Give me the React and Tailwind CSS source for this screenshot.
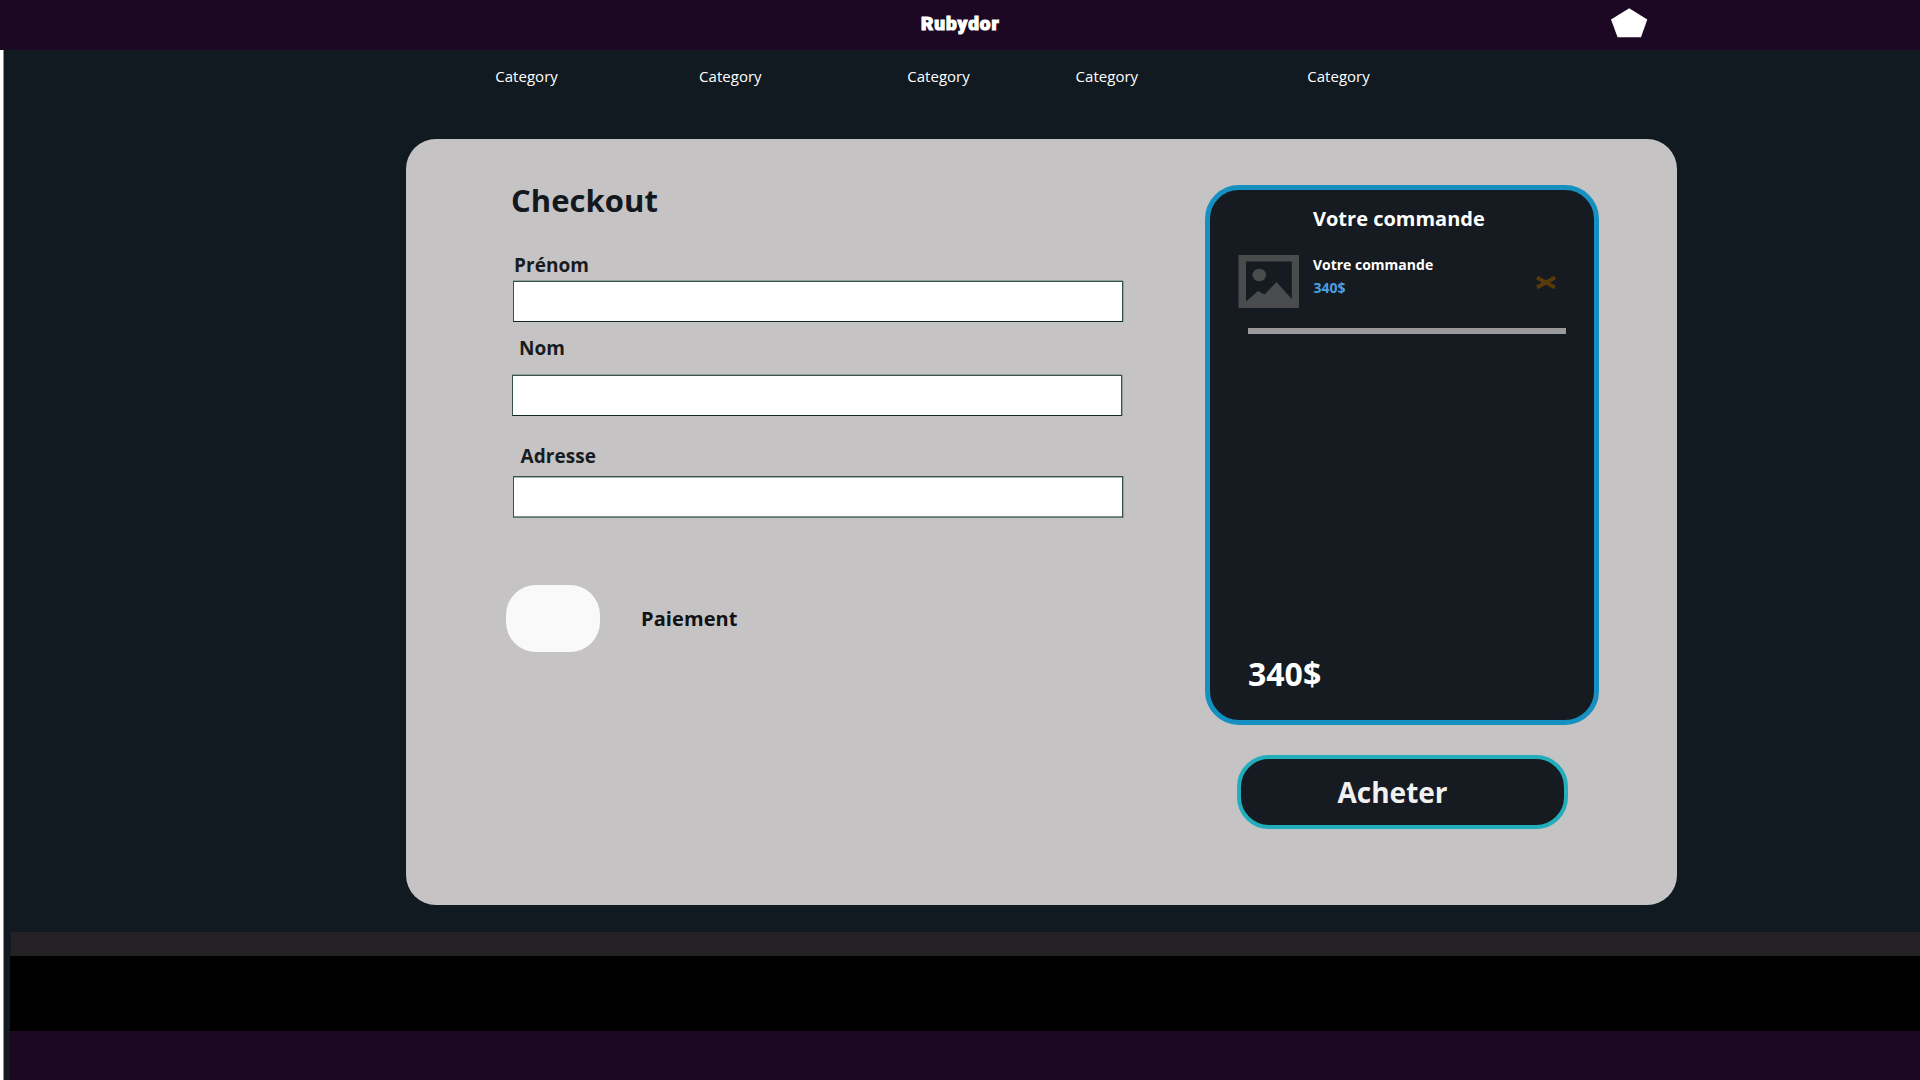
import React from "react";

const categories = [
  "w-[203.8px]",
  "w-[208.2px]",
  "w-[168.3px]",
  "w-[231.7px]",
  "w-[80px]",
];

function Header() {
  return (
    <header className="flex h-[50px] bg-[#1c0822]">
      <div
        className="ml-[921px] mt-[12px] h-6 w-[690px] whitespace-nowrap text-[19px] leading-6 font-black tracking-[0.95px] text-white [-webkit-text-stroke:1.1px_white]"
        style={{ fontFamily: "Roboto, sans-serif" }}
      >
        Rubydor
      </div>
      <svg className="mt-2 h-[30px] w-[37px]" viewBox="0 0 37 30">
        <path d="M18.2 0.2 L36.3 11.6 L30 29.3 H6.6 L0 11.6 Z" fill="#fff" />
      </svg>
    </header>
  );
}

function Nav() {
  return (
    <nav className="flex pt-[14px] pb-px pl-[495.3px] text-[15px] leading-6 font-[480] tracking-[0.02px] text-white">
      {categories.map((w, i) => (
        <a key={i} className={w}>
          Category
        </a>
      ))}
    </nav>
  );
}

function Field({ label, labelClass, inputClass }) {
  return (
    <>
      <label className={`block text-[19px] leading-6 font-[670] tracking-[0.05px] text-[#181c21] ${labelClass}`}>
        {label}
      </label>
      <input
        className={`block w-[610px] rounded-none border border-[#36524e] bg-white outline-none ${inputClass}`}
      />
    </>
  );
}

function Form() {
  return (
    <section className="w-[799.4px] pt-[41.5px] pl-[100px]">
      <h1 className="ml-[5px] text-[31px] leading-10 font-[670] tracking-[0.05px] text-[#12181d]">
        Checkout
      </h1>
      <Field
        label="Prénom"
        labelClass="mt-[33px] ml-[8px]"
        inputClass="mt-1 ml-[7px] h-[41px] border-b-[#102a27] shadow-[0_-1px_0_#91a19d,1px_0_0_#91a19d]"
      />
      <Field
        label="Nom"
        labelClass="mt-[13.5px] ml-[13px]"
        inputClass="mt-[15.5px] ml-[6px] h-[41px] border-b-[#102a27] shadow-[0_-1px_0_#91a19d,1px_0_0_#91a19d]"
      />
      <Field
        label="Adresse"
        labelClass="mt-[28px] ml-[14.5px]"
        inputClass="mt-[8px] ml-[7px] h-[42px] border-b-[#5f7873] shadow-[inset_0_1px_0_#a7b4b1,inset_0_-1px_0_#82938f,1px_0_0_#91a19d]"
      />
      <div className="mt-[66.5px] flex items-center">
        <div className="h-[67px] w-[93.5px] rounded-[30px] bg-[#f9f9f9]" />
        <span className="mt-px ml-[41.5px] text-[20px] leading-6 font-[670] tracking-[0.1px] text-[#101214]">
          Paiement
        </span>
      </div>
    </section>
  );
}

function OrderItem() {
  return (
    <div className="mt-[17px] ml-[27.5px] flex h-[53px]">
      <svg className="mt-[5px] h-[53px] w-[61px] shrink-0" viewBox="0 0 61 53">
        <path fillRule="evenodd" d="M0.5 0H61V53H0.5Z M8 6.5V46.5L20 36L26.5 39.5L38.5 27L53.8 44V6.5Z" fill="#4a4b4c" />
        <ellipse cx="21.3" cy="20" rx="6.8" ry="6.2" fill="#4a4b4c" />
      </svg>
      <div className="ml-[14px] w-[222.5px] text-[14px] leading-[23px] font-bold text-white">
        <p className="mt-[3px]">Votre commande</p>
        <p className="ml-[0.5px] text-[#4a9fe4]">340$</p>
      </div>
      <svg className="mt-[26px] h-[13px] w-[22px]" viewBox="0 0 22 13">
        <path d="M2 1.6 L20 11.4 M20 1.6 L2 11.4" stroke="#5a390b" strokeWidth="4" />
      </svg>
    </div>
  );
}

function Order() {
  return (
    <aside className="pt-[46.5px]">
      <div className="flex h-[539.5px] w-[394px] flex-col rounded-[34px] border-[5px] border-[#1590c1] bg-[#161b21]">
        <h2 className="mt-[15px] ml-[102.6px] text-[20px] leading-7 font-bold text-white">
          Votre commande
        </h2>
        <OrderItem />
        <div className="mt-[25px] ml-[37.6px] h-[6px] w-[318px] bg-[#9a9a9a]" />
        <p className="mt-auto mb-[26px] ml-[37.6px] text-[32px] leading-10 font-bold text-white">
          340$
        </p>
      </div>
      <button className="mt-[30.5px] ml-[31.6px] block h-[73.5px] w-[331px] rounded-[32px] border-4 border-[#21adb9] bg-[#161b21] pl-[96.5px] text-left text-[28px] leading-9 font-bold text-[#f1f1f2]">
        Acheter
      </button>
    </aside>
  );
}

export default function App() {
  return (
    <div
      className="flex h-[1080px] w-[1920px] flex-col overflow-hidden bg-[#111a20]"
      style={{ fontFamily: '"Open Sans", sans-serif' }}
    >
      <Header />
      <div className="flex h-[1030px] flex-col border-l-[3px] border-white shadow-[inset_1px_0_0_#8b9196]">
        <div className="-ml-[3px]">
          <Nav />
          <main className="mt-[49.5px] ml-[406px] flex h-[766.5px] w-[1271px] rounded-[30px] bg-[#c5c3c4]">
            <Form />
            <Order />
          </main>
        </div>
        <footer className="mt-[27px] ml-[7px]">
          <div className="ml-px h-6 bg-[#242224]" />
          <div className="h-[75px] bg-black" />
          <div className="h-[49px] bg-[#1c0822]" />
        </footer>
      </div>
    </div>
  );
}
